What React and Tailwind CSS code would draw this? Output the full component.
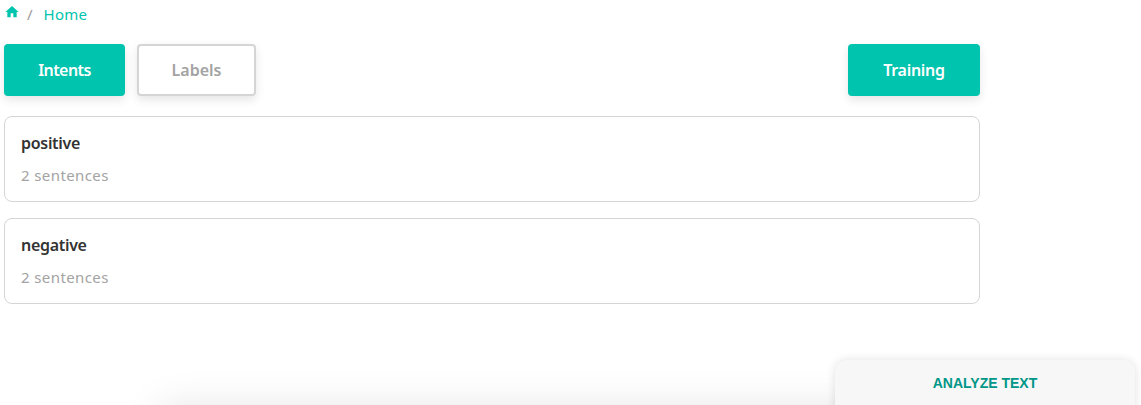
import React from "react";
import { MdHome } from "react-icons/md";

const FONT = "font-['Noto_Sans',sans-serif]";

const IntentCard = ({ name, count }) => (
  <div className="h-[86px] rounded-[8px] border border-[#d5d5d5] bg-white px-4 pt-[14px]">
    <div className="text-[16px] leading-[24px] font-semibold tracking-[-0.3px] text-[#333333]">{name}</div>
    <div className="mt-2 text-[15px] leading-[24px] tracking-[0.4px] text-[#a3a3a3]">{count} sentences</div>
  </div>
);

const App = () => {
  return (
    <div className={`relative h-[405px] w-[1141px] overflow-hidden bg-white ${FONT}`}>
      <div className="w-[976px] ml-1">
        {/* Breadcrumb */}
        <div className="flex h-[44px] items-start pt-[3px] text-[15px] leading-[22px]">
          <MdHome size={16} className="mt-[1px] text-[#00c4ad]" />
          <span className="ml-[7px] text-[#9a9a9a]">/</span>
          <span className="ml-[11px] tracking-[0.2px] text-[#00c4ad]">Home</span>
        </div>

        {/* Tabs */}
        <div className="flex items-start justify-between">
          <div className="flex gap-3">
            <button className="h-[52px] w-[121px] rounded-[4px] bg-[#00c4ad] text-[16px] font-semibold tracking-[-0.6px] text-white shadow-[0_4px_10px_rgba(0,0,0,0.1)]">
              Intents
            </button>
            <button className="h-[52px] w-[119px] rounded-[4px] border-2 border-[#d5d5d5] bg-white text-[16px] font-semibold text-[#a3a3a3] shadow-[0_4px_10px_rgba(0,0,0,0.1)]">
              Labels
            </button>
          </div>
          <button className="h-[52px] w-[132px] rounded-[4px] bg-[#00c4ad] text-[16px] font-semibold tracking-[-0.3px] text-white shadow-[0_4px_10px_rgba(0,0,0,0.1)]">
            Training
          </button>
        </div>

        {/* Intents */}
        <div className="mt-5 flex flex-col gap-4">
          <IntentCard name="positive" count={2} />
          <IntentCard name="negative" count={2} />
        </div>
      </div>

      {/* Offscreen panel, only its shadow shows */}
      <div className="absolute left-[160px] top-[410px] h-[200px] w-[840px] shadow-[0_0_40px_rgba(0,0,0,0.12)]" />

      {/* Analyze text panel */}
      <div className="absolute left-[835px] top-[360px] h-[100px] w-[300px] rounded-[12px] bg-[#f7f7f7] pt-[14px] text-center font-['Liberation_Sans',sans-serif] text-[14px] leading-[18px] font-bold text-[#009688] shadow-[0_0_10px_rgba(0,0,0,0.12)]">
        ANALYZE TEXT
      </div>
    </div>
  );
};

export default App;
